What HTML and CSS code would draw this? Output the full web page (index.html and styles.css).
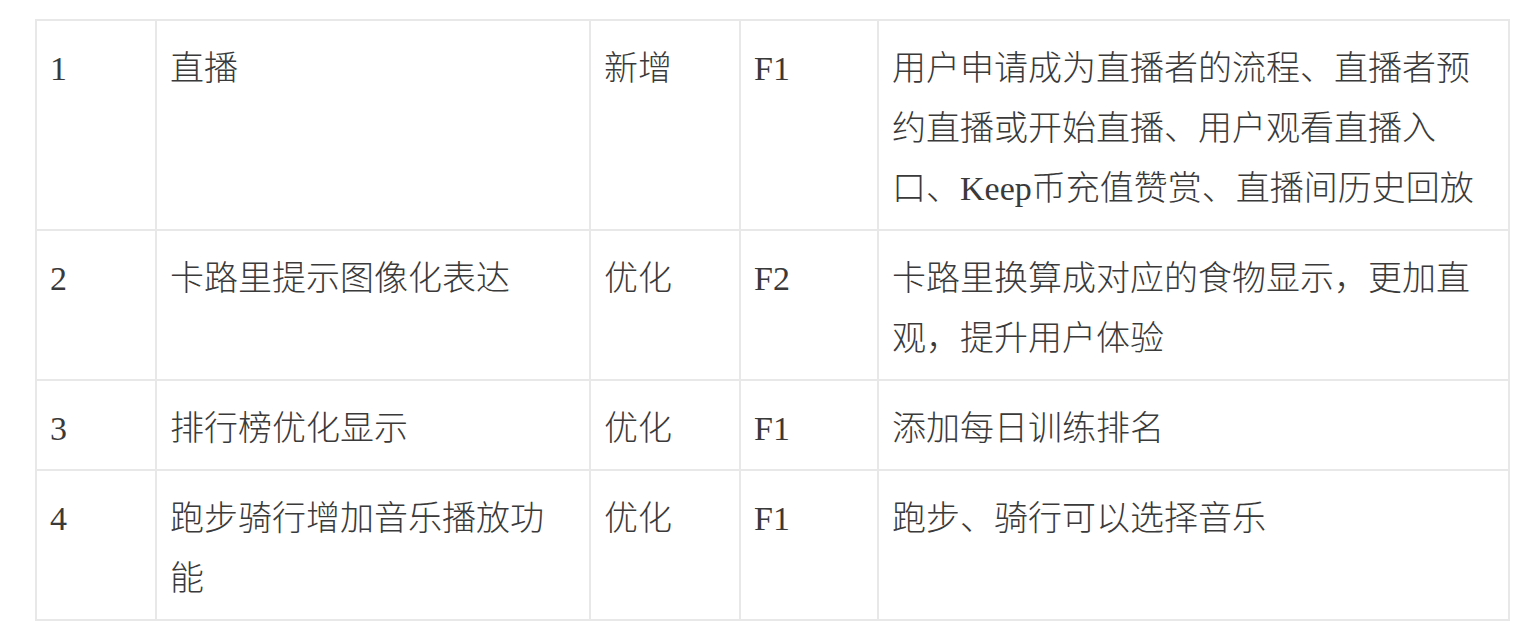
FILE: index.html
```html
<!DOCTYPE html>
<html lang="zh-CN">
<head>
<meta charset="utf-8">
<title>功能列表</title>
<link rel="stylesheet" href="styles.css">
</head>
<body>
<div class="page">
  <table class="feature-table">
    <colgroup>
      <col class="c-no">
      <col class="c-name">
      <col class="c-type">
      <col class="c-pri">
      <col class="c-desc">
    </colgroup>
    <tbody>
      <tr>
        <td>1</td>
        <td>直播</td>
        <td>新增</td>
        <td>F1</td>
        <td>用户申请成为直播者的流程、直播者预约直播或开始直播、用户观看直播入口、Keep币充值赞赏、直播间历史回放</td>
      </tr>
      <tr>
        <td>2</td>
        <td>卡路里提示图像化表达</td>
        <td>优化</td>
        <td>F2</td>
        <td>卡路里换算成对应的食物显示，更加直观，提升用户体验</td>
      </tr>
      <tr>
        <td>3</td>
        <td>排行榜优化显示</td>
        <td>优化</td>
        <td>F1</td>
        <td>添加每日训练排名</td>
      </tr>
      <tr>
        <td>4</td>
        <td>跑步骑行增加音乐播放功能</td>
        <td>优化</td>
        <td>F1</td>
        <td>跑步、骑行可以选择音乐</td>
      </tr>
    </tbody>
  </table>
</div>
</body>
</html>
```

FILE: styles.css
```css
html, body {
  margin: 0;
  padding: 0;
  background: #ffffff;
}

.page {
  padding: 19px 0 0 35px;
}

.feature-table {
  width: 1473px;
  table-layout: fixed;
  border-collapse: collapse;
  font-family: "Liberation Serif", "Noto Sans CJK SC", serif;
  font-size: 34px;
  font-weight: 300;
  line-height: 60px;
  color: #3a3a3a;
}

.c-no { width: 120px; }
.c-name { width: 434px; }
.c-type { width: 150px; }
.c-pri { width: 138px; }
.c-desc { width: 631px; }

.feature-table td {
  border: 2px solid #e8e8e8;
  padding: 18px 16px 10px 13px;
  vertical-align: top;
  text-align: left;
  word-break: break-all;
}
```
